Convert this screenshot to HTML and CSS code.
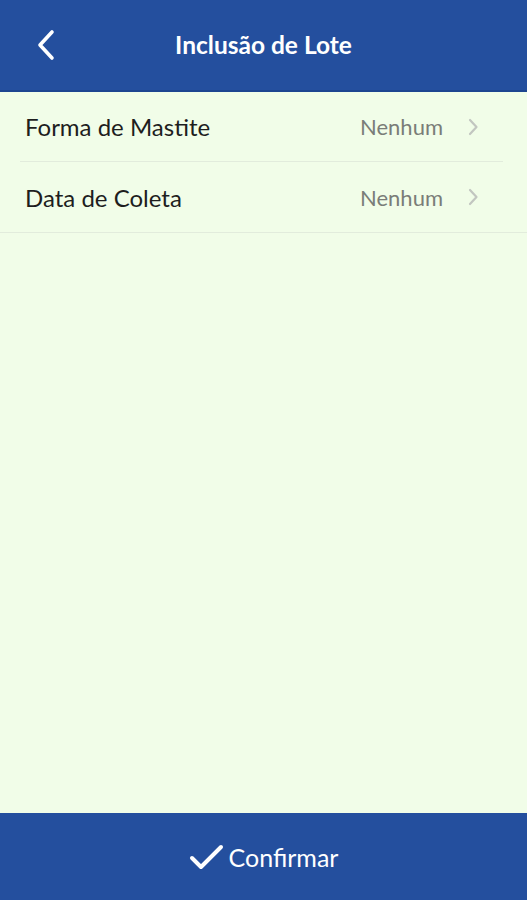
FILE: index.html
```html
<!DOCTYPE html>
<html>
<head>
    <meta charset="UTF-8">
    <meta name="viewport" content="width=device-width, initial-scale=1.0">
    <title>Inclusão de Lote</title>
    <link rel="stylesheet" href="styles.css">
</head>
<body>
    <header class="top-bar">
        <button class="back-btn" aria-label="Voltar">
            <svg width="20" height="32" viewBox="0 0 20 32">
                <path d="M16 3 L4 16 L16 29" fill="none" stroke="#fff" stroke-width="3.6" stroke-linecap="round" stroke-linejoin="round"/>
            </svg>
        </button>
        <h1>Inclusão de Lote</h1>
    </header>

    <main class="content">
        <ul class="form-list">
            <li class="form-row">
                <span class="label">Forma de Mastite</span>
                <span class="value">Nenhum</span>
                <svg class="chevron" width="12" height="18" viewBox="0 0 12 18">
                    <path d="M3 2 L9.5 9 L3 16" fill="none" stroke="#c2c6c0" stroke-width="2.2" stroke-linecap="round" stroke-linejoin="round"/>
                </svg>
            </li>
            <li class="form-row">
                <span class="label">Data de Coleta</span>
                <span class="value">Nenhum</span>
                <svg class="chevron" width="12" height="18" viewBox="0 0 12 18">
                    <path d="M3 2 L9.5 9 L3 16" fill="none" stroke="#c2c6c0" stroke-width="2.2" stroke-linecap="round" stroke-linejoin="round"/>
                </svg>
            </li>
        </ul>
    </main>

    <footer class="bottom-bar">
        <button class="confirm-btn">
            <svg width="36" height="28" viewBox="0 0 36 28">
                <path d="M3 15 L12 24 L32 4" fill="none" stroke="#fff" stroke-width="4" stroke-linecap="round" stroke-linejoin="round"/>
            </svg>
            <span>Confirmar</span>
        </button>
    </footer>
</body>
</html>
```

FILE: styles.css
```css
/* Global */
* {
    margin: 0;
    padding: 0;
    box-sizing: border-box;
}

body {
    font-family: Lato, "Open Sans", sans-serif;
    background-color: #f1fde8;
    height: 900px;
    display: flex;
    flex-direction: column;
}

/* Header */
.top-bar {
    height: 92px;
    background-color: #244f9e;
    border-bottom: 2px solid #1d4590;
    display: flex;
    align-items: center;
    justify-content: center;
    position: relative;
}

.top-bar h1 {
    color: #fff;
    font-size: 24.5px;
    font-weight: 700;
    margin-top: -2px;
}

.back-btn {
    position: absolute;
    left: 36px;
    top: 29px;
    background: none;
    border: none;
    cursor: pointer;
}

/* List */
.content {
    flex: 1;
}

.form-list {
    list-style: none;
    border-bottom: 1px solid #e2ecdc;
}

.form-row {
    height: 70px;
    display: flex;
    align-items: center;
    margin-left: 20px;
    margin-right: 24px;
    padding-left: 5px;
    border-bottom: 1px solid #e2ecdc;
}

.form-row:last-child {
    border-bottom: none;
}

.form-row .label {
    flex: 1;
    font-size: 24px;
    color: #1e1e1e;
}

.form-row .value {
    font-size: 22px;
    color: #7a7d78;
    margin-right: 24px;
}

.chevron {
    margin-right: 24px;
}

/* Footer */
.bottom-bar {
    height: 87px;
    background-color: #244f9e;
    display: flex;
    align-items: center;
    justify-content: center;
}

.confirm-btn {
    background: none;
    border: none;
    color: #fff;
    font-family: inherit;
    font-size: 25px;
    display: flex;
    align-items: center;
    gap: 4px;
    cursor: pointer;
}
```
